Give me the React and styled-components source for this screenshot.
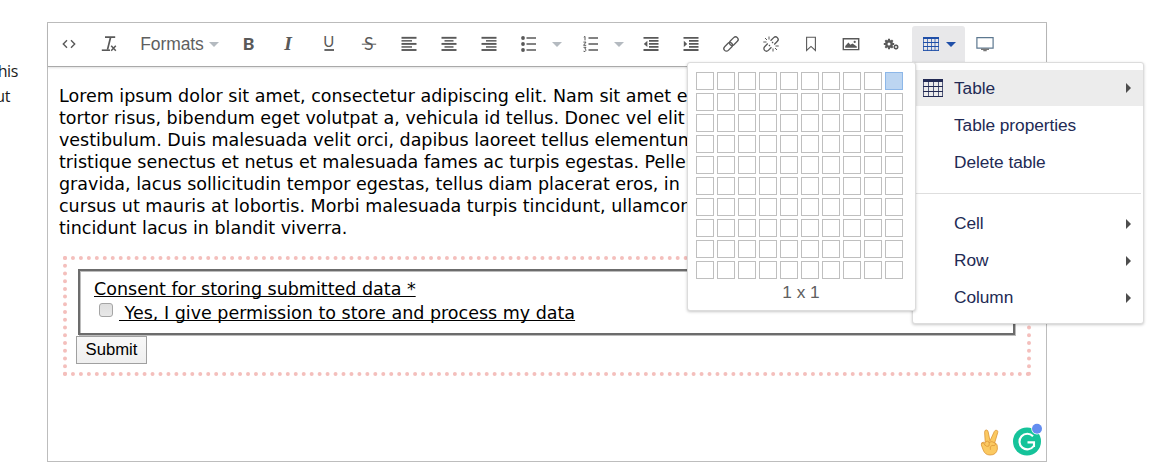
import React from "react";
import styled, { createGlobalStyle } from "styled-components";

const Global = createGlobalStyle`
  * { box-sizing: border-box; }
  body { margin: 0; background: #fff; overflow: hidden; }
`;

const Page = styled.div`
  display: flex;
  width: 1171px;
  height: 468px;
  font-family: "Liberation Sans", Arial, sans-serif;
`;

const Aside = styled.aside`
  width: 47px;
  padding-top: 59px;
  font: 16px/25px "Open Sans", sans-serif;
  letter-spacing: -0.4px;
  color: #1c1c1c;
  white-space: nowrap;
`;

const AsideLine = styled.div`
  width: ${(p) => p.$end}px;
  display: flex;
  justify-content: flex-end;
`;

const Editor = styled.main`
  position: relative;
  width: 1000px;
  height: 440px;
  margin-top: 22px;
  border: 1px solid #bdbdbd;
  background: #fff;
`;

const Toolbar = styled.div`
  display: flex;
  height: 44px;
  padding: 3px 0 0 1px;
  border-bottom: 1px solid #a9a9a9;
  box-shadow: 0 1px 2px rgba(0, 0, 0, 0.12);
`;

const ToolButton = styled.button`
  display: flex;
  align-items: center;
  flex: none;
  width: ${(p) => p.$w || 40}px;
  height: 36px;
  padding: 0 0 0 ${(p) => p.$pad ?? 10}px;
  border: 0;
  border-radius: 3px 3px 0 0;
  background: ${(p) => (p.$active ? "#e8e8ea" : "transparent")};
  color: ${(p) => (p.$active ? "#1f4fa8" : "#595959")};
  font: 17.5px "Liberation Sans", Arial, sans-serif;
`;

const FormatsLabel = styled.span`
  width: 64px;
  letter-spacing: -0.1px;
  color: #5f5f5f;
`;

const Caret = styled.span`
  margin-left: ${(p) => p.$gap}px;
  border: 5px solid transparent;
  border-top-color: ${(p) => (p.$active ? "#1f4fa8" : "#b4bac0")};
  border-bottom: 0;
`;

const Glyph = styled.svg`
  display: block;
  flex: none;
  overflow: visible;
`;

const Content = styled.section`
  padding: 18px 11px 0;
  font: 17.5px/22px "DejaVu Sans", Verdana, sans-serif;
  color: #000;
`;

const Line = styled.div`
  width: max-content;
  height: 22px;
  letter-spacing: ${(p) => p.$track || 0}px;
  white-space: pre;
`;

const FormFrame = styled.form`
  width: 968px;
  height: 120px;
  margin: 17px 0 0 4px;
  padding: 9px 11px 0 9px;
  border: 4px dotted #f4bfbc;
`;

const ConsentBox = styled.div`
  width: 937px;
  height: 66px;
  margin-left: 2px;
  padding: 6px 14px;
  border: 2px solid #6c6c6c;
  box-shadow: inset 1px 1px #bcbcbc, 1px 1px #bcbcbc;
  line-height: 24px;
`;

const Underlined = styled.div`
  height: 24px;
  width: max-content;
  text-decoration: underline;
  text-decoration-thickness: 1px;
  text-underline-offset: 1px;
  text-decoration-skip-ink: none;
  white-space: pre;
`;

const CheckRow = styled.label`
  display: flex;
  padding-left: 5px;
  gap: 6px;
`;

const Check = styled.span`
  width: 14px;
  height: 14px;
  margin-top: 2px;
  border: 1px solid #a5a5a5;
  border-radius: 3px;
  background: linear-gradient(#dedede, #e8e8e8);
`;

const Submit = styled.button`
  display: block;
  width: 71px;
  height: 28px;
  margin-top: 1px;
  padding: 0;
  border: 1px solid #a0a0a0;
  background: linear-gradient(#f8f8f8, #efefef);
  color: #000;
  font: 16.7px "Liberation Sans", Arial, sans-serif;
`;

const Badges = styled.div`
  position: absolute;
  right: 4px;
  bottom: 5px;
  display: flex;
  align-items: flex-end;
  gap: 13px;
`;

const Panel = styled.div`
  position: absolute;
  border: 1px solid #dcdcdc;
  border-radius: 3px;
  background: #fff;
  box-shadow: 0 1px 3px rgba(0, 0, 0, 0.22);
`;

const Menu = styled(Panel)`
  top: 39px;
  left: 864px;
  width: 232px;
  height: 262px;
  padding: 7px 0 0 2px;
`;

const MenuItem = styled.div`
  display: flex;
  align-items: center;
  height: ${(p) => (p.$active ? 36 : 37)}px;
  margin-bottom: ${(p) => (p.$active ? 1 : 0)}px;
  padding: 0 12px 0 8px;
  background: ${(p) => (p.$active ? "#ececec" : "transparent")};
  color: #222a54;
  font-size: 17.3px;
`;

const MenuIcon = styled.span`
  width: 31px;
  flex: none;
`;

const MenuText = styled.span`
  flex: 1;
  letter-spacing: -0.05px;
`;

const Arrow = styled.span`
  border: 5px solid transparent;
  border-left-color: #4d4d4d;
  border-right: 0;
`;

const Separator = styled.div`
  height: 1px;
  margin: 12px 2px 11px 0;
  background: #dedede;
`;

const SizePicker = styled(Panel)`
  top: 39px;
  left: 639px;
  width: 229px;
  height: 249px;
  padding: 9px 0 0 8px;
`;

const Cells = styled.div`
  display: grid;
  grid-template-columns: repeat(10, 18px);
  grid-auto-rows: 18px;
  gap: 3px;
`;

const Cell = styled.span`
  border: 1px solid ${(p) => (p.$on ? "#8db7e8" : "#bfbfbf")};
  background: ${(p) => (p.$on ? "#bcd5f1" : "#fff")};
`;

const SizeText = styled.div`
  width: 210px;
  margin-top: 4px;
  text-align: center;
  font-size: 17.3px;
  line-height: 19px;
  color: #606060;
`;

const Icon = ({ children, size = 18 }) => (
  <Glyph width={size} height={size} viewBox="0 0 18 18" fill="none" stroke="currentColor" strokeWidth="1.4">
    {children}
  </Glyph>
);

const letter = { fill: "currentColor", stroke: "none", fontFamily: "Lato, sans-serif" };
const serif = { fill: "currentColor", stroke: "none", fontFamily: "Liberation Serif, serif" };

const Lines = ({ rows }) => (
  <Icon>
    {rows.map(([a, b], i) => (
      <path key={i} d={`M${a} ${2.8 + i * 3.05}H${b}`} strokeWidth={i % 2 ? 1.5 : 1.9} />
    ))}
  </Icon>
);

const TableGlyph = ({ big }) => (
  <Glyph
    width={big ? 20 : 16}
    height={big ? 18 : 14}
    viewBox={big ? "0 0 20 18" : "0 0 16 14"}
    fill="none"
    stroke="currentColor"
  >
    {big ? (
      <>
        <path d="M0 1.5H20" strokeWidth="3" />
        <path d="M.5 0V18M5.5 0V18M10.5 0V18M15.5 0V18M19.5 0V18" strokeOpacity=".75" />
        <path d="M0 7.5H20M0 12.5H20M0 17.5H20" />
      </>
    ) : (
      <>
        <path d="M0 1H16" strokeWidth="2" />
        <path d="M.5 0V14M4.5 0V14M8.5 0V14M12 0V14M15.5 0V14" strokeOpacity=".75" />
        <path d="M0 5.5H16M0 9.5H16M0 13.4H16" />
      </>
    )}
  </Glyph>
);

const gearTeeth = [0, 45, 90, 135];

const icons = {
  code: <Icon><path d="M7 5.3 3.3 9 7 12.7M11 5.3 14.7 9 11 12.7" /></Icon>,
  clear: (
    <Icon>
      <path d="M5 2.2H15.2M10.6 2.2 7.5 14.6" strokeWidth="1.7" />
      <path d="M1.8 15.2H10" strokeWidth="1.6" />
      <path d="M11.2 10.8 15.8 15.8M15.8 10.8 11.2 15.8" strokeWidth="1.5" />
    </Icon>
  ),
  bold: <Icon><text x="2.8" y="15" fontSize="17.5" fontWeight="900" {...letter}>B</text></Icon>,
  italic: <Icon><text x="4.2" y="15" fontSize="19.5" fontWeight="700" fontStyle="italic" {...serif}>I</text></Icon>,
  underline: <Icon><text x="3.2" y="12" fontSize="15" {...letter}>U</text><path d="M4.4 15H14" strokeWidth="1.8" /></Icon>,
  strike: <Icon><text x="4" y="15" fontSize="17.5" {...letter}>S</text><path d="M1.8 9.2H16.2" strokeWidth="1" /></Icon>,
  left: <Lines rows={[[1.5, 16.5], [1.5, 12], [1.5, 16.5], [1.5, 12], [1.5, 16.5]]} />,
  center: <Lines rows={[[1.5, 16.5], [4.5, 13.5], [1.5, 16.5], [4.5, 13.5], [1.5, 16.5]]} />,
  right: <Lines rows={[[1.5, 16.5], [6, 16.5], [1.5, 16.5], [6, 16.5], [1.5, 16.5]]} />,
  bullets: (
    <Icon>
      <path d="M6.5 3H16M6.5 9H16M6.5 15H16" strokeWidth="1.7" />
      <g fill="currentColor" stroke="none"><circle cx="3" cy="3" r="1.9" /><circle cx="3" cy="9" r="1.9" /><circle cx="3" cy="15" r="1.9" /></g>
    </Icon>
  ),
  numbers: (
    <Icon>
      <path d="M6.5 3H16M6.5 9H16M6.5 15H16" strokeWidth="1.7" />
      <path d="M1.8 2.2 3 1.4V5.4M1.4 7.1H4L1.6 10.3H4.2M1.5 12.3H4L2.8 14Q4.2 14 3.8 15.6T1.5 16.2" strokeWidth="1" />
    </Icon>
  ),
  outdent: (
    <Icon>
      <path d="M1.5 2.8H16.5M1.5 15H16.5M7 5.85H16.5M7 8.9H16.5M7 11.95H16.5" strokeWidth="1.8" />
      <path d="M5.4 5.8V12L1.8 8.9Z" fill="currentColor" stroke="none" />
    </Icon>
  ),
  indent: (
    <Icon>
      <path d="M1.5 2.8H16.5M1.5 15H16.5M7 5.85H16.5M7 8.9H16.5M7 11.95H16.5" strokeWidth="1.8" />
      <path d="M1.8 5.8V12L5.2 8.9Z" fill="currentColor" stroke="none" />
    </Icon>
  ),
  link: (
    <Icon>
      <g transform="rotate(-45 9 9)" strokeWidth="1.3">
        <rect x="0" y="6.4" width="10" height="5.2" rx="2.6" />
        <rect x="8" y="6.4" width="10" height="5.2" rx="2.6" />
      </g>
    </Icon>
  ),
  unlink: (
    <Icon>
      <g transform="rotate(-45 9 9)" strokeWidth="1.3">
        <path d="M7 6.4H2.6a2.6 2.6 0 0 0 0 5.2H7M11 6.4H15.4a2.6 2.6 0 0 1 0 5.2H11M6 9H7.5M10.5 9H12" />
      </g>
      <path d="M7 1.5V4.5M3 3 5 5M1.3 7H4.5M11 13.5V16.5M13 13 15 15M13.5 11H16.7" strokeWidth="1" />
    </Icon>
  ),
  bookmark: <Icon><path d="M4.6 2.2H13.4V15.4L9 11.4 4.6 15.4Z" strokeWidth="1.1" /></Icon>,
  image: (
    <Icon>
      <path d="M1.3 3.8H16.7V14.6H1.3Z" />
      <path d="M3.2 12.8V11L6.4 7.4 8.4 9.8 10.5 8.4 14.8 11.4V12.8Z" fill="currentColor" stroke="none" />
      <circle cx="12.7" cy="6.9" r="1.1" fill="currentColor" stroke="none" />
    </Icon>
  ),
  gears: (
    <Icon>
      <circle cx="7" cy="9" r="2.7" strokeWidth="2.4" />
      {gearTeeth.map((a) => <path key={a} d="M7 3.8V5.8M7 12.2V14.2" strokeWidth="2.1" transform={`rotate(${a} 7 9)`} />)}
      <circle cx="14" cy="12" r="1.6" strokeWidth="1.3" />
      {gearTeeth.map((a) => <path key={a} d="M14 9.3V10.3M14 13.7V14.7" strokeWidth="1.1" transform={`rotate(${a} 14 12)`} />)}
    </Icon>
  ),
  preview: (
    <Icon>
      <path d="M.9 2.7H17.1V13.2H.9Z" stroke="#5d7890" strokeWidth="1.2" />
      <path d="M5 14.3H13M7.3 15.6H10.7" stroke="#777" />
    </Icon>
  ),
};

const afterFormats = ["bold", "italic", "underline", "strike", "left", "center", "right"];
const afterLists = ["outdent", "indent", "link", "unlink", "bookmark", "image", "gears"];

const Tool = ({ name }) => <ToolButton $pad={11}>{icons[name]}</ToolButton>;

const text = [
  "Lorem ipsum dolor sit amet, consectetur adipiscing elit. Nam sit amet est",
  "tortor risus, bibendum eget volutpat a, vehicula id tellus. Donec vel elit",
  "vestibulum. Duis malesuada velit orci, dapibus laoreet tellus elementum",
  "tristique senectus et netus et malesuada fames ac turpis egestas. Pellen",
  "gravida, lacus sollicitudin tempor egestas, tellus diam placerat eros, in",
  "cursus ut mauris at lobortis. Morbi malesuada turpis tincidunt, ullamcorp",
  "tincidunt lacus in blandit viverra.",
];

const Hand = () => (
  <Glyph width="20" height="27" viewBox="0 0 20 27" stroke="#dc9638" strokeWidth=".8">
    <path d="M5.3 14 4.6 3.2Q4.7.8 6.4 1 8 1.1 8.2 3L10 11.8 14.3 2.5Q15.2.7 16.9 1.4T17.7 3.7L14.8 13.4Q18 15 17.4 20 16.4 26 10 26 5 26 3.2 21L1.3 16Q1 13.4 3.2 13.2Z" fill="#fbc961" />
    <path d="M5.6 12.6Q8.2 11 9.3 13.5L9 17Q6.6 18.3 5 16M1.6 14Q4 12.8 5.2 16.5M8.5 13.5Q12 11.5 15.2 14 16.5 17.2 12 16.4 9.3 17.2 10.4 20.8" fill="none" />
  </Glyph>
);

const Assistant = () => (
  <Glyph width="29" height="33" viewBox="0 0 29 33">
    <circle cx="14" cy="18.5" r="14" fill="#15c39a" />
    <path d="M20 13.3A7.8 7.8 0 1 0 20.7 23" fill="none" stroke="#fff" strokeWidth="2.1" />
    <path d="M14.5 19.4H21V24" fill="none" stroke="#fff" strokeWidth="2.1" />
    <circle cx="24" cy="5.8" r="5.7" fill="#fff" />
    <circle cx="24" cy="5.8" r="5" fill="#638df0" />
  </Glyph>
);

export default function App() {
  return (
    <Page>
      <Global />
      <Aside>
        <AsideLine $end={18}>this</AsideLine>
        <AsideLine $end={10}>but</AsideLine>
      </Aside>
      <Editor>
        <Toolbar>
          <Tool name="code" />
          <Tool name="clear" />
          <ToolButton $w={101} $pad={11}>
            <FormatsLabel>Formats</FormatsLabel>
            <Caret $gap={5} />
          </ToolButton>
          {afterFormats.map((n) => <ToolButton key={n}>{icons[n]}</ToolButton>)}
          <ToolButton $w={62}>{icons.bullets}<Caret $gap={14} /></ToolButton>
          <ToolButton $w={60}>{icons.numbers}<Caret $gap={14} /></ToolButton>
          {afterLists.map((n) => <ToolButton key={n}>{icons[n]}</ToolButton>)}
          <ToolButton $w={53} $active $pad={11}>
            <TableGlyph />
            <Caret $gap={7} $active />
          </ToolButton>
          <Tool name="preview" />
        </Toolbar>
        <Content>
          {text.map((t) => <Line key={t}>{t}</Line>)}
          <FormFrame onSubmit={(e) => e.preventDefault()}>
            <ConsentBox>
              <Underlined>Consent for storing submitted data *</Underlined>
              <CheckRow>
                <Check />
                <Underlined> Yes, I give permission to store and process my data</Underlined>
              </CheckRow>
            </ConsentBox>
            <Submit>Submit</Submit>
          </FormFrame>
        </Content>
        <Badges>
          <Hand />
          <Assistant />
        </Badges>
        <Menu>
          <MenuItem $active>
            <MenuIcon><TableGlyph big /></MenuIcon>
            <MenuText>Table</MenuText>
            <Arrow />
          </MenuItem>
          <MenuItem><MenuIcon /><MenuText>Table properties</MenuText></MenuItem>
          <MenuItem><MenuIcon /><MenuText>Delete table</MenuText></MenuItem>
          <Separator />
          {["Cell", "Row", "Column"].map((n) => (
            <MenuItem key={n}><MenuIcon /><MenuText>{n}</MenuText><Arrow /></MenuItem>
          ))}
        </Menu>
        <SizePicker>
          <Cells>
            {Array.from({ length: 100 }, (_, i) => <Cell key={i} $on={i === 9} />)}
          </Cells>
          <SizeText>1 x 1</SizeText>
        </SizePicker>
      </Editor>
    </Page>
  );
}
